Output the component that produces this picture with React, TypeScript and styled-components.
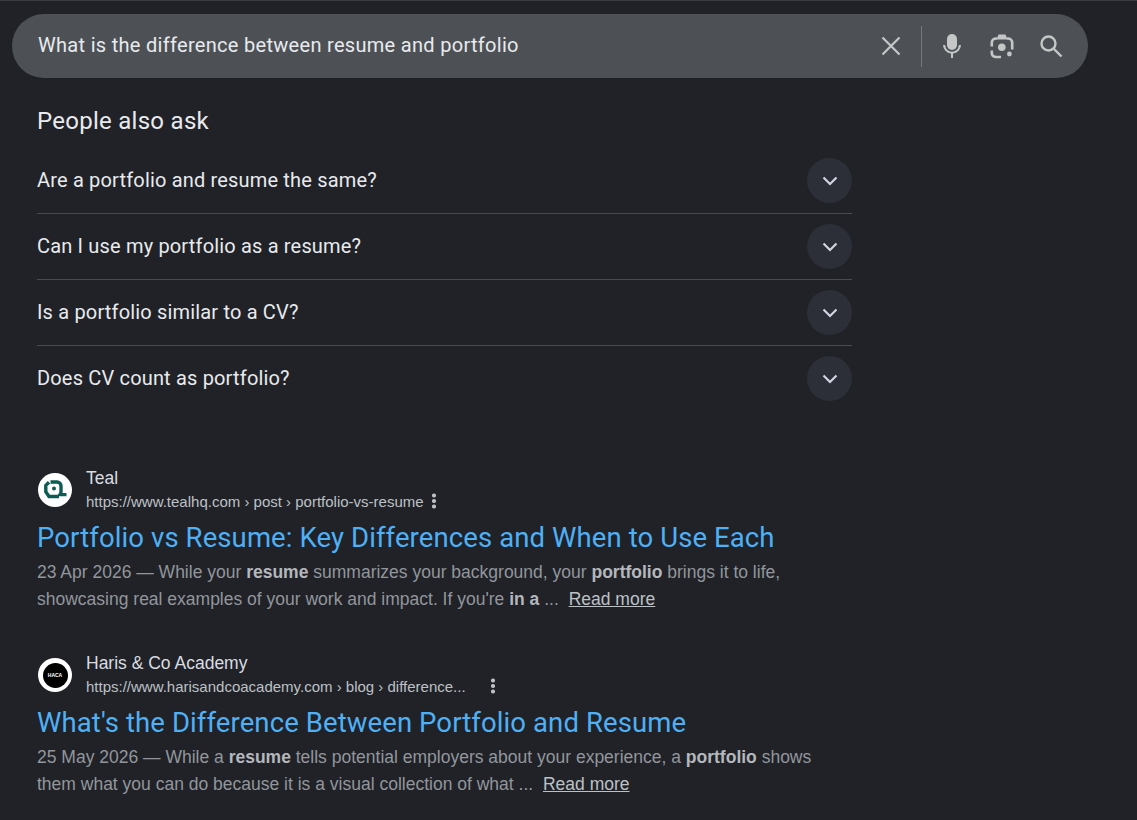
import styled, { createGlobalStyle } from "styled-components";

const questions = [
  "Are a portfolio and resume the same?",
  "Can I use my portfolio as a resume?",
  "Is a portfolio similar to a CV?",
  "Does CV count as portfolio?",
];

function App() {
  return (
    <Page>
      <GlobalStyle />
      <SearchBar>
        <Query>What is the difference between resume and portfolio</Query>
        <SearchIcons>
          <ClearSlot>
            <svg width="24" height="24" viewBox="0 0 24 24" fill="none" stroke="#c4c7c5" strokeWidth="2.2">
              <path d="M3.5 3.5l17 17M20.5 3.5l-17 17" />
            </svg>
          </ClearSlot>
          <Divider />
          <IconSlot $left={17}>
            <svg width="24" height="26" viewBox="0 0 24 26" fill="#c4c7c5">
              <rect x="7" y="1" width="10" height="16" rx="5" />
              <path d="M3 12h2.2a6.8 6.8 0 0 0 13.6 0H21a9 9 0 0 1-8 8.6V25h-2v-4.400A9 9 0 0 1 3 12z" />
            </svg>
          </IconSlot>
          <IconSlot $left={24}>
            <svg width="26" height="26" viewBox="0 0 26 26" fill="none">
              <path
                d="M8 5.5H6.5A4 4 0 0 0 2.800 9.500v4M2.800 17.500v2.700a4 4 0 0 0 3.700 3.800H12M18 5.500h1.500a4 4 0 0 1 3.700 4v7"
                stroke="#c4c7c5"
                strokeWidth="2.6"
              />
              <path d="M7.500 6.500L9.500 1.500h7l2 5z" fill="#c4c7c5" />
              <circle cx="12.8" cy="14.3" r="3.8" fill="#c4c7c5" />
              <circle cx="20.4" cy="21" r="2.4" fill="#c4c7c5" />
            </svg>
          </IconSlot>
          <IconSlot $left={23}>
            <svg width="26" height="26" viewBox="0 0 26 26" fill="none" stroke="#c4c7c5" strokeWidth="2.4">
              <circle cx="10.5" cy="10.5" r="7" />
              <path d="M15.5 15.5l8 8" />
            </svg>
          </IconSlot>
        </SearchIcons>
      </SearchBar>

      <Content>
        <Heading>People also ask</Heading>
        <Questions>
          {questions.map((q) => (
            <QuestionRow key={q}>
              <QuestionText>{q}</QuestionText>
              <Expand>
                <svg width="16" height="16" viewBox="0 0 16 16" fill="none" stroke="#d2d4e0" strokeWidth="2.2">
                  <path d="M1.5 4.5L8 11l6.5-6.5" />
                </svg>
              </Expand>
            </QuestionRow>
          ))}
        </Questions>

        <Results>
          <Result>
            <Source>
              <Favicon>
                <svg width="26" height="26" viewBox="0 0 26 26" fill="none">
                  <path
                    d="M8.5 5H15a4 4 0 0 1 4 4v6a4 4 0 0 1-1 2.6h6.5M7 5.2L3.8 8.4v6.4L7 19.5h10"
                    stroke="#0d5c53"
                    strokeWidth="3.4"
                  />
                  <circle cx="12" cy="11.4" r="2" fill="#0d5c53" />
                </svg>
              </Favicon>
              <SourceText>
                <SiteName>Teal</SiteName>
                <UrlLine>
                  <Url>https://www.tealhq.com › post › portfolio-vs-resume</Url>
                  <Dots $gap={8.5} />
                </UrlLine>
              </SourceText>
            </Source>
            <Title>Portfolio vs Resume: Key Differences and When to Use Each</Title>
            <Snippet>
              23 Apr 2026 — While your <b>resume</b> summarizes your background, your <b>portfolio</b> brings it to life,
              <br />
              showcasing real examples of your work and impact. If you're <b>in a</b> ... <ReadMore>Read more</ReadMore>
            </Snippet>
          </Result>

          <Result>
            <Source>
              <Favicon>
                <HacaMark>HACA</HacaMark>
              </Favicon>
              <SourceText>
                <SiteName>Haris &amp; Co Academy</SiteName>
                <UrlLine>
                  <Url>https://www.harisandcoacademy.com › blog › difference...</Url>
                  <Dots $gap={25.5} />
                </UrlLine>
              </SourceText>
            </Source>
            <Title>What's the Difference Between Portfolio and Resume</Title>
            <Snippet>
              25 May 2026 — While a <b>resume</b> tells potential employers about your experience, a <b>portfolio</b> shows
              <br />
              them what you can do because it is a visual collection of what ... <ReadMore>Read more</ReadMore>
            </Snippet>
          </Result>
        </Results>
      </Content>
    </Page>
  );
}

export default App;

const GlobalStyle = createGlobalStyle`
  html, body {
    margin: 0;
    background: #202227;
  }
`;

const Page = styled.div`
  height: 820px;
  box-sizing: border-box;
  padding: 14px 49px 0 12px;
  border-top: 1px solid #3c3d40;
  overflow: hidden;
  font-family: "Liberation Sans", Arial, sans-serif;
`;

const SearchBar = styled.div`
  display: flex;
  align-items: center;
  justify-content: space-between;
  height: 64px;
  margin-top: -1px;
  padding: 0 24px 0 26px;
  border-radius: 32px;
  background: #4d5156;
`;

const Query = styled.div`
  margin-top: -2px;
  font-family: Roboto, sans-serif;
  font-size: 20px;
  letter-spacing: 0.3px;
  color: #e8eaed;
`;

const SearchIcons = styled.div`
  display: flex;
  align-items: center;
`;

const IconSlot = styled.div<{ $left: number }>`
  display: flex;
  align-items: center;
  justify-content: center;
  width: 26px;
  height: 26px;
  margin-left: ${(p) => p.$left}px;
`;

const ClearSlot = styled.div`
  display: flex;
  align-items: center;
  justify-content: center;
  width: 26px;
  height: 26px;
  margin-right: 17px;
`;

const Divider = styled.div`
  width: 1px;
  height: 41px;
  background: #75787c;
`;

const Content = styled.div`
  width: 815px;
  padding-left: 25px;
`;

const Heading = styled.h2`
  margin: 27px 0 0;
  height: 43px;
  font-family: Roboto, sans-serif;
  font-size: 24px;
  line-height: 32px;
  font-weight: 400;
  letter-spacing: 0.27px;
  color: #e8eaed;
`;

const Questions = styled.div`
  display: flex;
  flex-direction: column;
`;

const QuestionRow = styled.div`
  display: flex;
  align-items: center;
  justify-content: space-between;
  height: 65px;
  border-bottom: 1px solid #4a4b4f;
  font-family: Roboto, sans-serif;
  font-size: 20px;
  letter-spacing: 0.17px;
  color: #e8eaed;

  &:last-child {
    border-bottom: none;
  }
`;

const QuestionText = styled.span`
  margin-bottom: 2px;
`;

const Expand = styled.div`
  display: flex;
  align-items: center;
  justify-content: center;
  width: 45px;
  height: 45px;
  border-radius: 50%;
  background: #2c2f37;
`;

const Results = styled.div`
  display: flex;
  flex-direction: column;
  gap: 40px;
  margin-top: 57px;
`;

const Result = styled.div`
  display: flex;
  flex-direction: column;
  height: 145px;
`;

const Source = styled.div`
  display: flex;
  align-items: center;
  gap: 14px;
  height: 52px;
`;

const Favicon = styled.div`
  display: flex;
  align-items: center;
  justify-content: center;
  flex-shrink: 0;
  width: 34px;
  height: 34px;
  margin-left: 1px;
  border-radius: 50%;
  background: #fff;
`;

const HacaMark = styled.div`
  display: flex;
  align-items: center;
  justify-content: center;
  width: 25px;
  height: 25px;
  border-radius: 50%;
  background: #000;
  color: #fff;
  font-size: 5px;
  font-weight: 700;
`;

const SourceText = styled.div`
  display: flex;
  flex-direction: column;
  gap: 2px;
  padding-bottom: 1px;
`;

const SiteName = styled.div`
  font-size: 17.5px;
  line-height: 21px;
  color: #dadce0;
`;

const UrlLine = styled.div`
  display: flex;
  align-items: center;
  height: 20px;
`;

const Url = styled.span`
  font-size: 15px;
  color: #bdc1c6;
`;

const Dots = styled.span<{ $gap: number }>`
  width: 3.5px;
  height: 3.5px;
  margin-left: ${(p) => p.$gap}px;
  border-radius: 50%;
  background: #bdc1c6;
  box-shadow: 0 -5.5px 0 #bdc1c6, 0 5.5px 0 #bdc1c6;
`;

const Title = styled.div`
  margin-top: 8px;
  font-family: Roboto, sans-serif;
  font-size: 27.5px;
  line-height: 36px;
  letter-spacing: 0.1px;
  color: #4eb0f5;
`;

const Snippet = styled.div`
  margin-top: 3px;
  font-size: 17.5px;
  line-height: 27px;
  color: #92969c;

  & b {
    color: #b4b7bc;
  }
`;

const ReadMore = styled.span`
  margin-left: 5px;
  color: #bdc1c6;
  text-decoration: underline;
`;
